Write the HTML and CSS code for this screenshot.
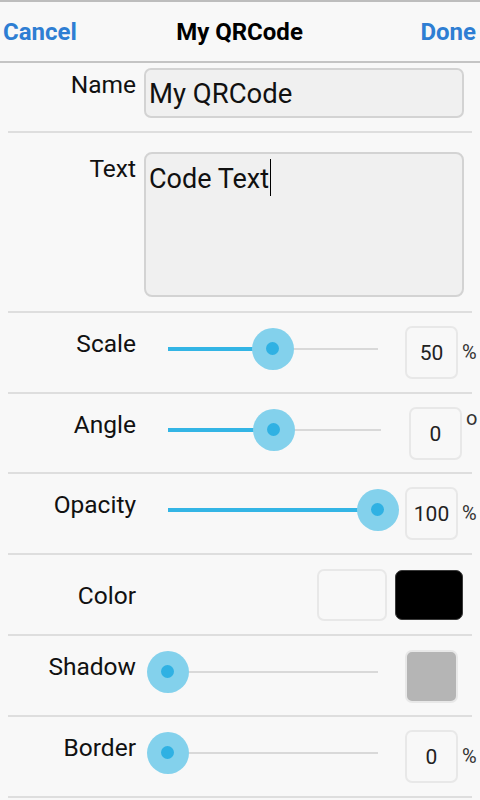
FILE: index.html
```html
<!DOCTYPE html>
<html>
<head>
<meta charset="utf-8">
<link rel="stylesheet" href="styles.css">
</head>
<body>
<div class="topline"></div>
<header class="header">
  <span class="hbtn hbtn-left">Cancel</span>
  <span class="title">My QRCode</span>
  <span class="hbtn hbtn-right">Done</span>
</header>

<div class="row row-name">
  <div class="label">Name</div>
  <div class="input">My QRCode</div>
</div>
<div class="sep"></div>

<div class="row row-text">
  <div class="label">Text</div>
  <div class="textarea">Code Text<span class="cursor"></span></div>
</div>
<div class="sep"></div>

<div class="row row-slider">
  <div class="label">Scale</div>
  <div class="slider">
    <div class="track"><div class="fill" style="width:50%"></div></div>
    <div class="thumb" style="left:105px"></div>
  </div>
  <div class="valbox">50</div>
  <div class="unit">%</div>
</div>
<div class="sep"></div>

<div class="row row-slider row-short">
  <div class="label">Angle</div>
  <div class="slider slider-angle">
    <div class="track"><div class="fill" style="width:50%"></div></div>
    <div class="thumb" style="left:106px"></div>
  </div>
  <div class="valbox valbox-angle">0</div>
  <div class="unit unit-deg">o</div>
</div>
<div class="sep"></div>

<div class="row row-slider">
  <div class="label">Opacity</div>
  <div class="slider">
    <div class="track"><div class="fill" style="width:100%"></div></div>
    <div class="thumb" style="left:210px"></div>
  </div>
  <div class="valbox">100</div>
  <div class="unit">%</div>
</div>
<div class="sep"></div>

<div class="row row-color">
  <div class="label label-mid">Color</div>
  <div class="swatch swatch-white"></div>
  <div class="swatch swatch-black"></div>
</div>
<div class="sep"></div>

<div class="row row-slider">
  <div class="label">Shadow</div>
  <div class="slider">
    <div class="track"><div class="fill" style="width:0%"></div></div>
    <div class="thumb" style="left:0px"></div>
  </div>
  <div class="valbox valbox-gray"></div>
</div>
<div class="sep"></div>

<div class="row row-slider">
  <div class="label">Border</div>
  <div class="slider">
    <div class="track"><div class="fill" style="width:0%"></div></div>
    <div class="thumb" style="left:0px"></div>
  </div>
  <div class="valbox">0</div>
  <div class="unit">%</div>
</div>
<div class="sep"></div>
</body>
</html>
```

FILE: styles.css
```css
* { box-sizing: border-box; }
html, body {
  margin: 0;
  padding: 0;
  background: #f8f8f8;
  font-family: Roboto, "Liberation Sans", sans-serif;
  color: #111;
  width: 480px;
  height: 800px;
  overflow: hidden;
}
.topline {
  height: 2px;
  background: #bdbdbd;
}
.header {
  height: 61px;
  display: grid;
  grid-template-columns: 1fr auto 1fr;
  align-items: center;
  padding: 0 4px 0 3px;
  border-bottom: 2px solid #c4c4c4;
  font-size: 24px;
  font-weight: bold;
}
.hbtn { color: #2e7ed3; }
.hbtn-left { justify-self: start; }
.hbtn-right { justify-self: end; }
.title { color: #000; }

.row {
  display: flex;
  align-items: flex-start;
}
.sep {
  height: 2px;
  margin: 0 8px;
  background: #dedede;
}
.label {
  width: 136px;
  text-align: right;
  font-size: 24.5px;
  line-height: 27px;
  color: #111;
  flex: none;
}

.row-name { height: 68px; }
.row-name .label { padding-top: 8px; }
.input {
  margin-top: 5px;
  margin-left: 8px;
  width: 320px;
  height: 50px;
  border: 2px solid #d3d3d3;
  border-radius: 7px;
  background: #f0f0f0;
  font-size: 27.5px;
  line-height: 30px;
  padding: 9px 0 0 3px;
  color: #111;
}

.row-text { height: 178px; }
.row-text .label { padding-top: 22px; }
.textarea {
  margin-top: 19px;
  margin-left: 8px;
  width: 320px;
  height: 145px;
  border: 2px solid #d3d3d3;
  border-radius: 8px;
  background: #f0f0f0;
  font-size: 27px;
  line-height: 30px;
  padding: 5px 0 0 3px;
  color: #111;
}
.cursor {
  display: inline-block;
  width: 1px;
  height: 37px;
  background: #000;
  vertical-align: -8px;
  margin-left: 1px;
}

.row-slider { height: 79px; }
.row-short { height: 78px; }
.row-slider .label { padding-top: 17px; }
.slider {
  position: relative;
  flex: none;
  margin-left: 11px;
  margin-top: 15px;
  width: 252px;
  height: 42px;
  padding: 0 21px;
  display: flex;
  align-items: center;
}
.slider-angle { width: 255px; }
.track {
  position: relative;
  width: 100%;
  height: 2px;
  background: #d9d9d9;
}
.fill {
  position: absolute;
  left: 0;
  top: -1px;
  height: 4px;
  background: #33b5e5;
}
.thumb {
  position: absolute;
  top: 0;
  width: 42px;
  height: 42px;
  border-radius: 50%;
  background: #83d1ec;
}
.thumb::after {
  content: "";
  position: absolute;
  left: 14px;
  top: 14px;
  width: 13px;
  height: 13px;
  border-radius: 50%;
  background: #2fb1e3;
}
.valbox {
  flex: none;
  margin-left: 6px;
  margin-top: 13px;
  width: 53px;
  height: 53px;
  border: 2px solid #e8e8e8;
  border-radius: 7px;
  display: flex;
  align-items: center;
  justify-content: center;
  font-size: 21px;
  color: #222;
}
.valbox-angle { margin-left: 7px; }
.valbox-gray {
  background: #b5b5b5;
  margin-top: 14px;
}
.unit {
  margin-left: 4px;
  margin-top: 27px;
  font-size: 20px;
  line-height: 24px;
  color: #333;
}
.unit-deg {
  margin-top: 12px;
  font-size: 20px;
}

.row-color {
  height: 79px;
  justify-content: flex-start;
}
.label-mid { padding-top: 27px; }
.swatch {
  flex: none;
  border-radius: 7px;
}
.swatch-white {
  margin-left: auto;
  margin-top: 14px;
  width: 70px;
  height: 52px;
  border: 2px solid #e8e8e8;
  background: #f8f8f8;
}
.swatch-black {
  margin-left: 8px;
  margin-right: 17px;
  margin-top: 15px;
  width: 68px;
  height: 50px;
  background: #000;
  border: 1px solid #3a3a3a;
}
```
